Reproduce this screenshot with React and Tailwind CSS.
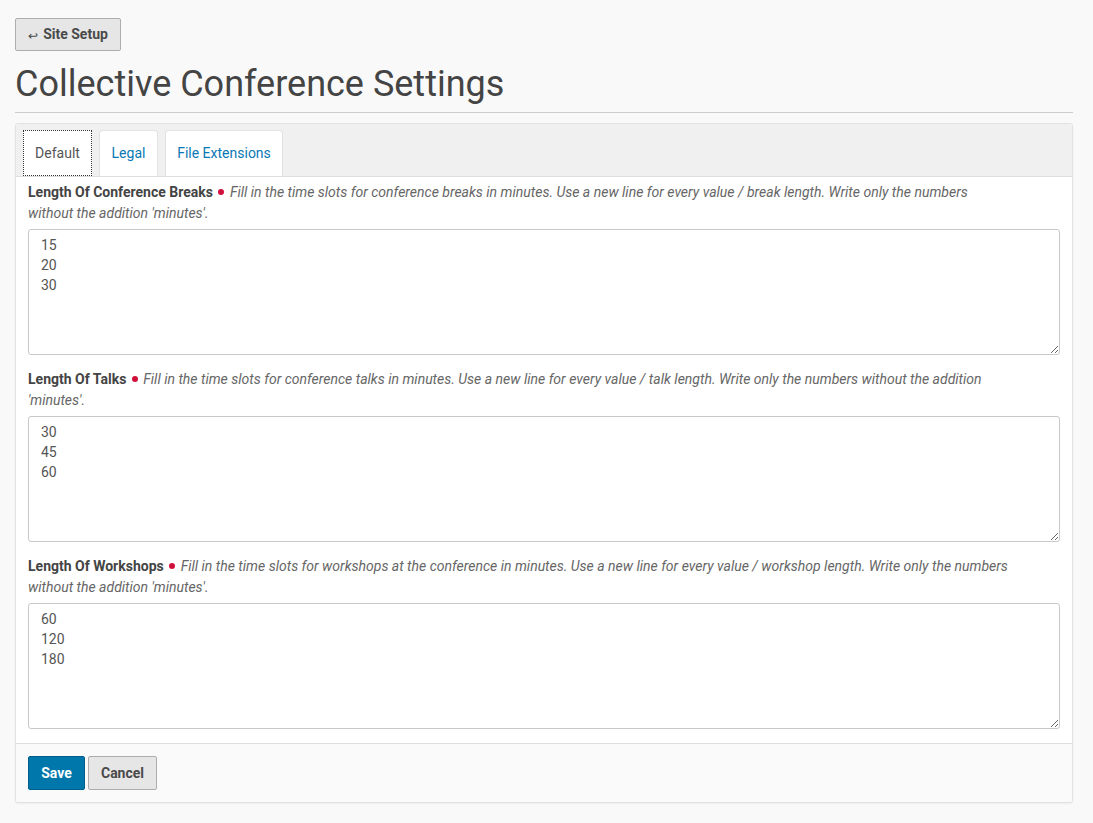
const fields = [
  {
    label: "Length Of Conference Breaks",
    help: "Fill in the time slots for conference breaks in minutes. Use a new line for every value / break length. Write only the numbers without the addition 'minutes'.",
    value: "15\n20\n30",
  },
  {
    label: "Length Of Talks",
    help: "Fill in the time slots for conference talks in minutes. Use a new line for every value / talk length. Write only the numbers without the addition 'minutes'.",
    value: "30\n45\n60",
  },
  {
    label: "Length Of Workshops",
    help: "Fill in the time slots for workshops at the conference in minutes. Use a new line for every value / workshop length. Write only the numbers without the addition 'minutes'.",
    value: "60\n120\n180",
  },
];

export default function App() {
  return (
    <div
      className="min-h-screen bg-[#f9f9f9] pl-[15px] pr-[20px] pt-[18px] pb-5 text-[#555]"
      style={{ fontFamily: "Roboto, 'Liberation Sans', sans-serif" }}
    >
      <button className="h-[33px] w-[106px] rounded-[2px] border border-[#adadad] bg-[#e6e6e6] text-[14px] font-bold text-[#4a4a4a] flex items-center justify-center gap-[5px]">
        <span className="text-[12px] font-normal mt-[3px]">↩</span>
        <span>Site Setup</span>
      </button>

      <h1 className="mt-[12px] text-[36px] leading-[42px] text-[#444] font-normal">
        Collective Conference Settings
      </h1>
      <div className="mt-[7px] border-b border-[#ccc]" />

      <div className="mt-[10px] rounded-[3px] border border-[#e2e2e2] bg-white shadow-[0_1px_2px_rgba(0,0,0,0.05)] overflow-hidden">
        <div className="flex items-end gap-[7px] bg-[#f0f0f0] px-[7px] pt-[6px]">
          <div className="h-[46px] w-[69px] border border-dotted border-[#333] bg-white text-[14px] text-[#555] flex items-center justify-center">
            Default
          </div>
          <div className="h-[46px] w-[59px] rounded-t-[4px] border border-b-0 border-[#e2e2e2] bg-white text-[14px] text-[#0a78b4] flex items-center justify-center">
            Legal
          </div>
          <div className="h-[46px] w-[118px] rounded-t-[4px] border border-b-0 border-[#e2e2e2] bg-white text-[14px] text-[#0a78b4] flex items-center justify-center">
            File Extensions
          </div>
        </div>

        <div className="border-t border-[#ddd] px-[12px] pt-[5px] pb-[14.5px] flex flex-col gap-[14.5px]">
          {fields.map((f) => (
            <div key={f.label}>
              <p className="max-w-[982px] text-[14px] leading-[21px]">
                <span className="font-bold text-[#444]">{f.label}</span>{" "}
                <span className="inline-block h-[6px] w-[6px] mx-[2px] rounded-full bg-[#d0103a] align-middle mb-[2px]" />{" "}
                <span className="italic text-[#666]">{f.help}</span>
              </p>
              <textarea
                defaultValue={f.value}
                className="mt-[4.5px] block h-[126px] w-full rounded-[3px] border border-[#c8c8c8] bg-white px-[12px] py-[5px] text-[14px] leading-[20px] text-[#555] outline-none"
                style={{ fontFamily: "Roboto, 'Liberation Sans', sans-serif" }}
              />
            </div>
          ))}
        </div>

        <div className="border-t border-[#ddd] bg-[#fafafa] px-[12px] pt-[12px] pb-[12px] flex gap-[3px]">
          <button className="h-[34px] w-[57px] rounded-[2px] border border-[#005f8a] bg-[#0077aa] text-[14px] font-bold text-white">
            Save
          </button>
          <button className="h-[34px] w-[69px] rounded-[2px] border border-[#adadad] bg-[#e6e6e6] text-[14px] font-bold text-[#4a4a4a]">
            Cancel
          </button>
        </div>
      </div>
    </div>
  );
}
